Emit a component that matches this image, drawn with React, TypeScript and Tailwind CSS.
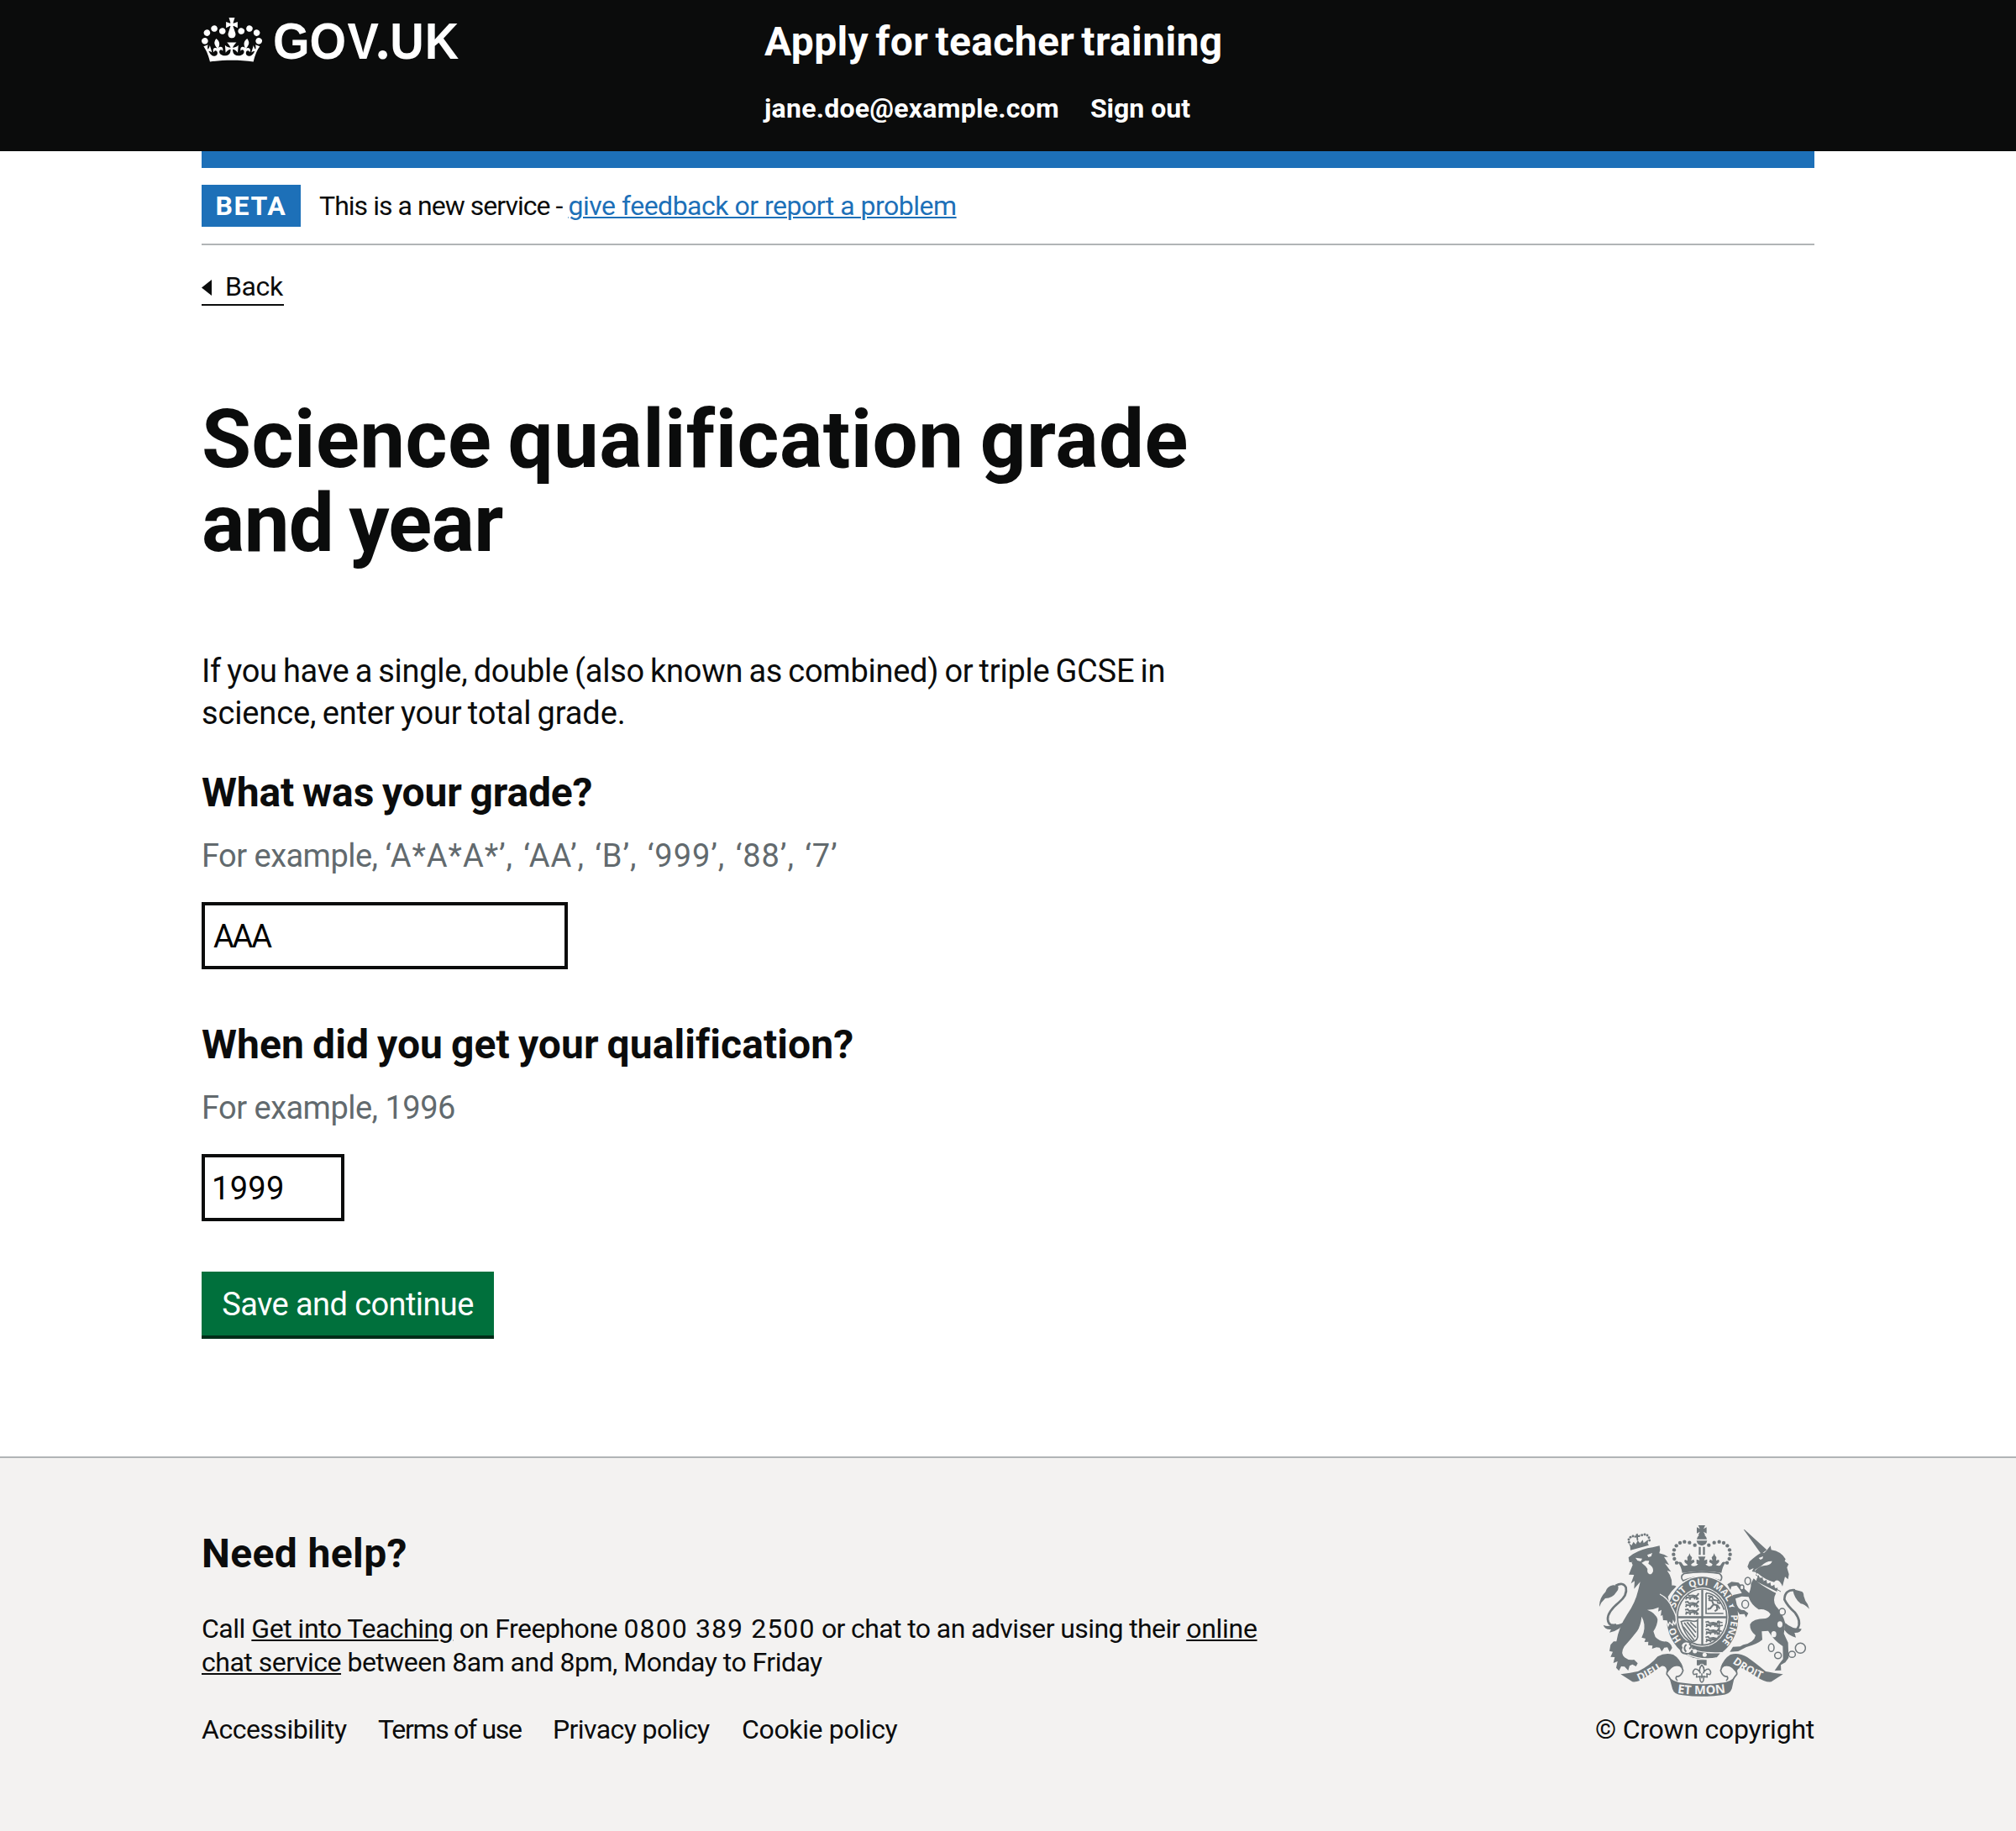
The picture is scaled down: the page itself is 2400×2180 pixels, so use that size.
import type { ReactNode } from "react";

const GREY = "#6f777b";
const PAPER = "#f3f2f1";

function Crown() {
  return (
    <svg viewBox="0 0 132 97" className="h-[53px] w-[72px] shrink-0" fill="currentColor" aria-hidden="true">
      <path
        fillRule="evenodd"
        d="M25 30.2c3.5 1.5 7.7-.2 9.1-3.7 1.5-3.6-.2-7.8-3.9-9.2-3.6-1.4-7.6.3-9.1 3.9-1.4 3.5.3 7.5 3.9 9zM9 39.5c3.6 1.5 7.8-.2 9.2-3.7 1.5-3.6-.2-7.8-3.9-9.1-3.6-1.5-7.6.2-9.1 3.8-1.4 3.5.3 7.5 3.8 9zM4.4 57.2c3.5 1.5 7.7-.2 9.1-3.8 1.5-3.6-.2-7.7-3.9-9.1-3.5-1.5-7.6.3-9.1 3.8-1.4 3.5.3 7.6 3.9 9.1zm38.3-21.4c3.5 1.5 7.7-.2 9.1-3.8 1.5-3.6-.2-7.7-3.9-9.1-3.6-1.5-7.6.3-9.1 3.8-1.3 3.6.4 7.7 3.9 9.1zm64.4-5.6c-3.6 1.5-7.8-.2-9.1-3.7-1.5-3.6.2-7.8 3.8-9.2 3.6-1.4 7.7.3 9.2 3.9 1.3 3.5-.4 7.5-3.9 9zm15.9 9.3c-3.6 1.5-7.7-.2-9.1-3.7-1.5-3.6.2-7.8 3.7-9.1 3.6-1.5 7.7.2 9.2 3.8 1.5 3.5-.3 7.5-3.8 9zm4.7 17.7c-3.6 1.5-7.8-.2-9.2-3.8-1.5-3.6.2-7.7 3.9-9.1 3.6-1.5 7.7.3 9.2 3.8 1.3 3.5-.4 7.6-3.9 9.1zM89.3 35.8c-3.6 1.5-7.8-.2-9.2-3.8-1.4-3.6.2-7.7 3.9-9.1 3.6-1.5 7.7.3 9.2 3.8 1.4 3.6-.3 7.7-3.9 9.1zM69.7 17.7l8.9 4.7V9.3l-8.9 2.8c-.2-.3-.5-.6-.9-.9L72.4 0H59.6l3.5 11.2c-.3.3-.6.5-.9.9l-8.8-2.8v13.1l8.8-4.7c.3.3.6.7.9.9l-5 15.4v.1c-.2.8-.4 1.6-.4 2.4 0 4.1 3.1 7.5 7 8.1h.2c.3 0 .7.1 1 .1.4 0 .7 0 1-.1h.2c4-.6 7.1-4.1 7.1-8.1 0-.8-.1-1.7-.4-2.4V34l-5.1-15.4c.4-.2.7-.6 1-.9zM66 92.8c16.9 0 32.8 1.1 47.1 3.2 4-16.9 8.9-26.7 14-33.5l-9.6-3.4c1 4.9 1.1 7.2 0 10.2-1.5-1.4-3-4.3-4.2-8.7L108.6 76c2.8-2 5-3.2 7.5-3.3-4.4 9.4-10 11.9-13.6 11.2-4.3-.8-6.3-4.6-5.6-7.9 1-4.7 5.7-5.9 8-.5 4.3-8.7-3-11.4-7.6-8.8 7.1-7.2 7.9-13.5 2.1-21.1-8 6.1-8.1 12.3-4.5 20.8-4.7-5.4-12.1-2.5-9.5 6.2 3.4-5.2 7.9-2 7.2 3.1-.6 4.3-6.4 7.8-13.5 7.2-10.3-.9-10.9-8-11.2-13.8 2.5-.5 7.1 1.8 11 7.3L80.2 60c-4.1 4.4-8 5.3-12.3 5.4 1.4-4.4 8-11.6 8-11.6H55.5s6.4 7.2 7.9 11.6c-4.2-.1-8-1-12.3-5.4l1.4 16.4c3.9-5.5 8.5-7.7 10.9-7.3-.3 5.8-.9 12.8-11.1 13.8-7.2.6-12.9-2.9-13.5-7.2-.7-5 3.8-8.3 7.1-3.1 2.7-8.7-4.6-11.6-9.4-6.2 3.7-8.5 3.6-14.7-4.6-20.8-5.8 7.6-5 13.9 2.2 21.1-4.7-2.6-11.9.1-7.7 8.8 2.3-5.5 7.1-4.2 8.1.5.7 3.3-1.3 7.1-5.7 7.9-3.5.7-9-1.8-13.5-11.2 2.5.1 4.7 1.3 7.5 3.3l-4.7-15.4c-1.2 4.4-2.7 7.2-4.3 8.7-1.1-3-.9-5.3 0-10.2l-9.5 3.4c5 6.9 9.9 16.7 14 33.5 14.8-2.1 30.8-3.2 47.7-3.2z"
      />
    </svg>
  );
}

function Wordmark() {
  return (
    <svg viewBox="0 0 222 60" className="ml-3.5 h-[60px] w-[222px] shrink-0 overflow-visible" fill="currentColor">
      <g transform="scale(.92 1)" className="font-['Liberation_Sans',sans-serif] text-[61px] font-bold">
        <text x="-1 46.2 95" y="49">GOV</text>
        <text x="130.7" y="49" className="font-['Roboto',sans-serif] text-[72px]">.</text>
        <text x="150.4 195.5" y="49">UK</text>
      </g>
    </svg>
  );
}

const pearls: [number, number][] = [
  [383, 119], [364, 110], [346, 107], [330, 111], [317, 121], [309, 136], [307, 152], [310, 168], [318, 182],
];

/** Three stacked passant lions, used for two quarters of the shield. */
function Lions({ x, y }: { x: number; y: number }) {
  return (
    <g transform={`translate(${x} ${y})`} fill="none" stroke={GREY} strokeWidth="5.5" strokeLinejoin="round">
      {[0, 27, 54].map((dy) => (
        <path
          key={dy}
          d={`M3 ${dy + 4}l10 -2 4 6 14 -2 12 3 8 -6 M5 ${dy + 12}l12 3 14 -3 14 2 6 6 M10 ${dy + 14}l-5 7 M23 ${dy + 13}l-3 9 M35 ${dy + 12}l3 9 M48 ${dy + 4}l4 -5 M46 ${dy + 15}l-2 7`}
        />
      ))}
    </g>
  );
}

function Crest() {
  return (
    <svg viewBox="42 45 750 618" className="h-[206px] w-[250px]" fill={GREY} aria-hidden="true">
      <defs>
        <path id="ring" d="M410 496A102 117 0 1 1 410.1 496" />
        <path id="scroll-l" d="M184 606Q238 584 288 546" />
        <path id="scroll-r" d="M517 539Q572 582 648 609" />
        <path id="scroll-m" d="M320 647Q408 659 500 645" />
        <clipPath id="shield"><ellipse cx="409" cy="376" rx="86" ry="98" /></clipPath>
      </defs>

      {/* Lion's crown */}
      <g>
        <path d="M152 124l-5 -12 10 8 7 -13 8 9 7 -14 8 10 10 -12 3 12 16 -12 -1 14 4 5 -66 18z" />
        <path d="M172 80l7 -3 1 7 8 -2 -1 8 -7 0 1 12 -5 1 -2 -12 -6 2 -2 -7 7 -1z" />
        {[[148, 109], [147, 99], [153, 91], [162, 87], [194, 83], [204, 81], [213, 84], [219, 92], [221, 102]].map(([x, y]) => (
          <circle key={`${x}-${y}`} cx={x} cy={y} r="4.4" />
        ))}
      </g>

      {/* Lion */}
      <path d="M146 163L162 151Q196 131 232 127L257 121L259 136L256 148Q276 152 288 161L273 161Q282 174 291 190L276 184Q286 198 298 214L284 210Q297 226 300 244L301 263Q309 262 317 266L300 284L287 303L291 322Q307 350 315 371Q319 386 312 402L306 391L304 405L293 395L288 407L282 390L270 389L272 366L261 372L264 350L252 356L254 341Q234 350 213 350Q243 361 250 384Q250 404 235 427L242 447Q259 465 279 463Q297 466 302 486L293 500L285 484L274 485L265 499L257 485L246 484L230 489L232 478L216 476L217 464L203 465L207 453L193 449L200 431Q208 400 193 374Q190 406 177 426Q157 452 131 481Q116 505 132 520Q146 532 166 528L179 541L173 552L160 545L150 550L145 567L132 553L120 552L112 568L102 557L107 534L92 540L97 519L82 518L90 500L78 497L82 475L93 463L103 463Q111 412 142 365Q170 326 181 279L188 250L166 275L168 247L155 256L166 225L147 224L161 190L157 181L163 179L149 180Z" />
      <g fill={PAPER}>
        <path d="M171 164l24 3 -5 10 -12 -3z" />
        <path d="M213 154l18 -7 -4 12 -10 3z" />
        <path d="M193 182l13 -7 14 0 -3 10Q236 196 234 212Q230 224 221 223Q211 218 214 204L207 194z" />
      </g>

      {/* Lion's tail */}
      <path d="M100 264Q127 249 137 270Q143 298 112 323Q70 358 72 384Q75 411 102 403" fill="none" stroke={GREY} strokeWidth="8" />
      <path d="M42 339Q41 309 64 286Q69 266 91 262L108 263Q113 275 104 285Q89 309 63 309Q48 322 42 339ZM56 404Q77 414 88 401Q112 408 133 391Q119 424 78 431L84 420Q62 422 56 404Z" />

      {/* Royal crown */}
      <path d="M395 48h25l-6 13 11 -6v22l-11 -6 6 12h-25l6 -12 -11 6v-22l11 6zM390 98Q393 81 408 80Q423 81 426 98ZM389 103h38Q424 119 408 121Q392 119 389 103Z" />
      {pearls.map(([x, y]) => (
        <g key={`${x}-${y}`}>
          <circle cx={x} cy={y} r="6.5" />
          <circle cx={816 - x} cy={y} r="6.5" />
        </g>
      ))}
      <path d="M397 125h7v29h-7zM412 125h7v29h-7z" />
      <path d="M323 181Q333 173 340 188Q344 196 358 190L350 183Q343 177 348 171L357 174L356 162Q363 156 364 148Q366 158 373 163L370 174L379 170L382 179L370 187L371 193Q389 197 395 187L389 185V170L400 173L395 160H421L416 173L427 170V185L421 187Q428 197 444 193L446 187L434 179L437 170L446 174L443 163Q450 158 452 148Q454 157 460 162L459 174L468 171Q473 177 466 183L458 190Q472 196 476 188Q483 173 493 181Q482 195 478 218Q408 207 338 218Q334 195 323 181Z" />
      <path d="M346 220Q408 210 470 220Q485 230 475 246Q408 220 341 246Q328 230 346 220Z" fill={PAPER} stroke={GREY} strokeWidth="5" />

      {/* Garter and shield */}
      <ellipse cx="410" cy="379" rx="132" ry="151" fill={PAPER} />
      <ellipse cx="410" cy="379" rx="128" ry="147" />
      <ellipse cx="409" cy="376" rx="94" ry="106" fill={PAPER} />
      <ellipse cx="409" cy="376" rx="88" ry="100" fill="none" stroke={GREY} strokeWidth="5" />
      <g clipPath="url(#shield)">
        <path d="M406 270h7v210h-7zM318 373h180v7H318z" />
        <Lions x={345} y={292} />
        <Lions x={418} y={390} />
        <path d="M423 290V363H485M423 290Q465 292 488 350" fill="none" stroke={GREY} strokeWidth="5" />
        <path d="M430 300l14 3 5 11 15 4 6 -5M432 315l12 2 6 14 14 3 8 12M448 333l-10 12 -10 2M461 335l2 14 -9 6M439 304l-7 8M462 324l12 3" fill="none" stroke={GREY} strokeWidth="6" />
        <path d="M334 392Q352 385 373 390Q387 394 393 386V447Q389 462 374 463Q345 436 334 392Z" fill="none" stroke={GREY} strokeWidth="5" />
        <path d="M345 396L385 448M355 394L387 431M367 394L388 414M342 410L380 458M462 392l20 4M463 410l20 -5M463 422l16 5M463 437l10 -4M470 390v50" fill="none" stroke={GREY} strokeWidth="5" />
      </g>
      <g fill={PAPER} className="font-['Open_Sans',sans-serif] text-[34px] font-bold">
        <text><textPath href="#ring" startOffset="12.6%">HO</textPath></text>
        <text><textPath href="#ring" startOffset="30.2%">SOIT</textPath></text>
        <text><textPath href="#ring" startOffset="43.4%">QUI</textPath></text>
        <text><textPath href="#ring" startOffset="55.4%">MAL Y</textPath></text>
        <text><textPath href="#ring" startOffset="73.4%">PENSE</textPath></text>
      </g>
      <path d="M258 294Q289 309 303 345Q307 350 315 371Q319 386 312 402L306 391L304 405L293 395L288 407L282 390L270 389" stroke={PAPER} strokeWidth="4" />
      <path d="M346 480Q400 508 478 503L463 521Q410 534 345 505Z" stroke={PAPER} strokeWidth="4" />
      <circle cx="353" cy="485" r="20" fill={PAPER} />
      <path d="M370 471Q350 455 337 470Q330 477 336 485Q329 498 342 505L357 508M353 474Q339 485 352 500M363 471Q377 482 363 489" fill="none" stroke={GREY} strokeWidth="6" />
      <circle cx="383" cy="498" r="7.5" fill={PAPER} />
      <circle cx="418" cy="511" r="7.5" fill={PAPER} />

      {/* Fleur-de-lis */}
      <path d="M390 529h35v19h-8q-9 -12 -18 0h-9z" />
      <path d="M408 547Q395 559 403 577Q395 560 383 562Q372 571 379 581L390 579L389 590L401 589L402 602Q408 616 414 602L415 589L427 590L426 579L437 581Q444 571 433 562Q421 560 413 577Q421 559 408 547ZM396 588h24M408 577v18" fill={PAPER} stroke={GREY} strokeWidth="4.5" />

      {/* Unicorn */}
      <path d="M557 63L561 64L640 136L620 151ZM631 146L640 137L653 121L656 136Q691 141 707 169L704 176L718 187L712 199L719 223L716 241L705 232L696 266Q681 233 666 251Q634 243 607 219L603 221L598 210Q618 190 640 191Q656 188 659 176Q636 175 621 193L597 208L600 215L587 213L593 201L578 208L571 196L578 178Q601 157 617 148Z" />
      <path d="M611 165l16 -6 -2 8 -8 4z" fill={PAPER} />
      <path d="M600 224Q641 260 690 285" fill="none" stroke={GREY} strokeWidth="3" />
      <path d="M604 239l7 -14 3 13 11 -4 2 14 12 -5 2 15 12 -6 2 15 12 -7 2 14 10 -3 -3 14 -74 -37z" />
      <path d="M593 238Q613 259 662 285L673 290Q659 315 673 337Q696 362 706 398L701 435L716 467L718 521L706 538L690 547L691 566L668 567L684 544L698 526L697 480Q665 459 645 425L622 427L624 457Q606 473 567 483L538 498L508 500L519 482L545 481L556 475Q595 467 600 441Q579 425 580 402Q590 381 635 381Q650 376 653 365Q637 345 611 349Q583 331 575 304L550 302L528 310L533 332Q542 353 559 351L574 362L566 377L560 365L543 366L520 332L515 306L520 297L551 290L543 277L532 263L514 266L510 279L499 259L514 250L539 253L559 274L577 290Q585 267 583 257Z" />
      <g fill={PAPER}>
        <ellipse cx="687" cy="402" rx="9" ry="11" />
        <ellipse cx="665" cy="437" rx="9" ry="11" />
      </g>
      <g fill={PAPER} stroke={GREY} strokeWidth="4.5">
        <ellipse cx="572" cy="247" rx="10" ry="13" /><ellipse cx="551" cy="270" rx="7" ry="9" />
        <ellipse cx="563" cy="330" rx="12" ry="14" /><ellipse cx="695" cy="357" rx="11" ry="12" />
        <ellipse cx="656" cy="485" rx="10" ry="14" /><ellipse cx="680" cy="513" rx="12" ry="11" />
        <ellipse cx="730" cy="509" rx="12" ry="11" /><circle cx="760" cy="487" r="18" />
      </g>
      <path d="M741 280Q704 276 703 313Q713 335 740 359Q766 394 749 418Q733 428 710 411" fill="none" stroke={GREY} strokeWidth="8" />
      <path d="M732 276L763 284Q772 286 772 301L778 318Q788 329 792 347Q774 329 761 328Q739 312 732 276ZM706 397Q730 419 764 418Q762 433 739 432L744 449Q718 444 702 421Z" />

      {/* Ribbon */}
      <path d="M118 580Q155 575 180 570Q225 548 250 517Q277 501 306 510Q330 524 342 558Q331 547 306 551L284 575Q283 548 264 551L211 588Q182 610 160 607Z" />
      <path d="M698 580Q661 575 636 570Q600 540 570 519Q539 501 510 510Q486 524 474 558Q485 547 510 551L532 575Q535 553 553 559L605 590Q634 610 656 607Z" />
      <path d="M306 551Q334 541 341 567Q333 590 318 588Q312 595 321 603M306 551Q281 562 283 580Q292 590 297 600M510 551Q482 541 475 567Q483 590 498 588Q504 595 495 603M510 551Q535 562 533 580Q524 590 519 600" fill="none" stroke={GREY} strokeWidth="5" />
      <path d="M291 588Q303 609 343 611Q408 620 473 611Q513 609 525 588L515 632Q508 652 477 655Q408 664 339 655Q308 652 303 632Z" />
      <g fill={PAPER} className="font-['Open_Sans',sans-serif] text-[38px] font-bold">
        <text><textPath href="#scroll-l">DIEU</textPath></text>
        <text><textPath href="#scroll-r">DROIT</textPath></text>
        <text className="text-[44px]"><textPath href="#scroll-m">ET MON</textPath></text>
      </g>
    </svg>
  );
}

function Container({ children, className = "" }: { children: ReactNode; className?: string }) {
  return <div className={`mx-auto w-[1920px] ${className}`}>{children}</div>;
}

function Header() {
  return (
    <header className="h-[180px] bg-[#0b0c0c] text-white">
      <Container className="flex">
        <a href="#" className="flex w-[670px] items-start pt-[21px]">
          <Crown />
          <Wordmark />
        </a>
        <div className="pt-5">
          <a href="#" className="block text-[48px]/[60px] font-bold tracking-[0.34px] [word-spacing:-4px]">Apply for teacher training</a>
          <nav className="mt-[29px] flex gap-[37px] text-[32px]/[40px] font-bold">
            <a href="#" className="tracking-[0.25px]">jane.doe@example.com</a>
            <a href="#">Sign out</a>
          </nav>
        </div>
      </Container>
    </header>
  );
}

function PhaseBanner() {
  return (
    <div className="flex h-[112px] items-center border-t-[20px] border-b-2 border-t-[#1d70b8] border-b-[#b1b4b6]">
      <strong className="flex h-[50px] w-[118px] items-center justify-center bg-[#1d70b8] text-[32px]/[40px] font-bold tracking-[1.6px] text-white">BETA</strong>
      <p className="ml-[22px] text-[32px]/[40px] whitespace-pre">
        <span className="tracking-[-0.96px]">This is a new service - </span>
        <a href="#" className="tracking-[-0.5px] text-[#1d70b8] underline decoration-2 underline-offset-2">give feedback or report a problem</a>
      </p>
    </div>
  );
}

type FieldProps = {
  label: string;
  labelClass: string;
  hint: ReactNode;
  value: string;
  inputClass: string;
};

function Field({ label, labelClass, hint, value, inputClass }: FieldProps) {
  return (
    <div className="mb-[60px] flex flex-col items-start">
      <label className={`text-[48px]/[60px] font-bold [word-spacing:-2px] ${labelClass}`}>{label}</label>
      <span className="mt-5 mb-[30px] text-[38px]/[50px] tracking-[-0.52px] whitespace-pre text-[#626a6e]">{hint}</span>
      <input
        defaultValue={value}
        className={`h-20 rounded-none border-4 border-[#0b0c0c] bg-white pt-0.5 text-[38px] text-black outline-none ${inputClass}`}
      />
    </div>
  );
}

function Footer() {
  return (
    <footer className="h-[446px] border-t-2 border-[#b1b4b6] bg-[#f3f2f1]">
      <Container className="flex justify-between">
        <div className="pt-[84px] text-[32px]/[40px]">
          <h2 className="text-[48px]/[60px] font-bold tracking-[0.37px]">Need help?</h2>
          <p className="mt-[39px] tracking-[-0.48px] whitespace-nowrap">
            Call <a href="#" className="underline decoration-2 underline-offset-2">Get into Teaching</a> on Freephone{" "}
            <span className="tracking-[1.1px]">0800 389 2500</span>
            <span className="tracking-[-0.6px]"> or chat to an adviser using their </span>
            <a href="#" className="underline decoration-2 underline-offset-2">
              <span className="tracking-[-0.3px]">online</span>
              <br />
              chat service
            </a>
            <span className="tracking-[-0.52px]"> between 8am and 8pm, Monday to Friday</span>
          </p>
          <ul className="mt-10 flex">
            <li className="w-[210px] tracking-[-0.5px]">Accessibility</li>
            <li className="w-[208px] tracking-[-1.3px]">Terms of use</li>
            <li className="w-[225px] tracking-[-0.6px]">Privacy policy</li>
            <li className="tracking-[-0.35px]">Cookie policy</li>
          </ul>
        </div>
        <div className="flex flex-col items-end pt-[79px]">
          <span className="mr-1.5"><Crest /></span>
          <a href="#" className="mt-[18px] text-[32px]/[40px] tracking-[-0.24px]">© Crown copyright</a>
        </div>
      </Container>
    </footer>
  );
}

export default function App() {
  return (
    <div className="flex h-[2180px] flex-col bg-white font-['Roboto',sans-serif] text-[#0b0c0c]">
      <Header />
      <Container className="flex-1">
        <PhaseBanner />
        <a href="#" className="mt-[29px] flex h-[43px] w-[98px] items-start gap-4 border-b-2 border-[#0b0c0c] text-[32px]/[40px] tracking-[-0.36px]">
          <svg viewBox="0 0 12 19" className="mt-3 h-[19px] w-3" fill="currentColor"><path d="M0 9.5 12 0v19z" /></svg>
          Back
        </a>
        <main className="pt-[109px]">
          <h1 className="text-[96px]/[100px] font-bold [word-spacing:-5px]">
            <span className="tracking-[0.45px]">Science qualification grade</span>
            <br />
            <span className="tracking-[-0.7px]">and year</span>
          </h1>
          <p className="mt-[101px] mb-10 text-[38px]/[50px] [word-spacing:-2px]">
            <span className="tracking-[-0.26px]">If you have a single, double (also known as combined) or triple GCSE in</span>
            <br />
            <span className="tracking-[-0.13px]">science, enter your total grade.</span>
          </p>
          <Field
            label="What was your grade?" labelClass="tracking-[-0.15px]"
            hint={<>For example, <span className="tracking-[0.95px] [word-spacing:2px]">‘A*A*A*’, ‘AA’, ‘B’, ‘999’, ‘88’, ‘7’</span></>}
            value="AAA" inputClass="w-[436px] pl-[10px] tracking-[-2.2px]"
          />
          <Field
            label="When did you get your qualification?" labelClass="tracking-[0.08px]"
            hint="For example, 1996"
            value="1999" inputClass="w-[170px] pl-2 tracking-[0.3px]"
          />
          <button className="h-20 w-[348px] border-b-4 border-[#002d18] bg-[#00703c] pt-0.5 text-[38px] tracking-[-0.59px] text-white">
            Save and continue
          </button>
        </main>
      </Container>
      <Footer />
    </div>
  );
}
